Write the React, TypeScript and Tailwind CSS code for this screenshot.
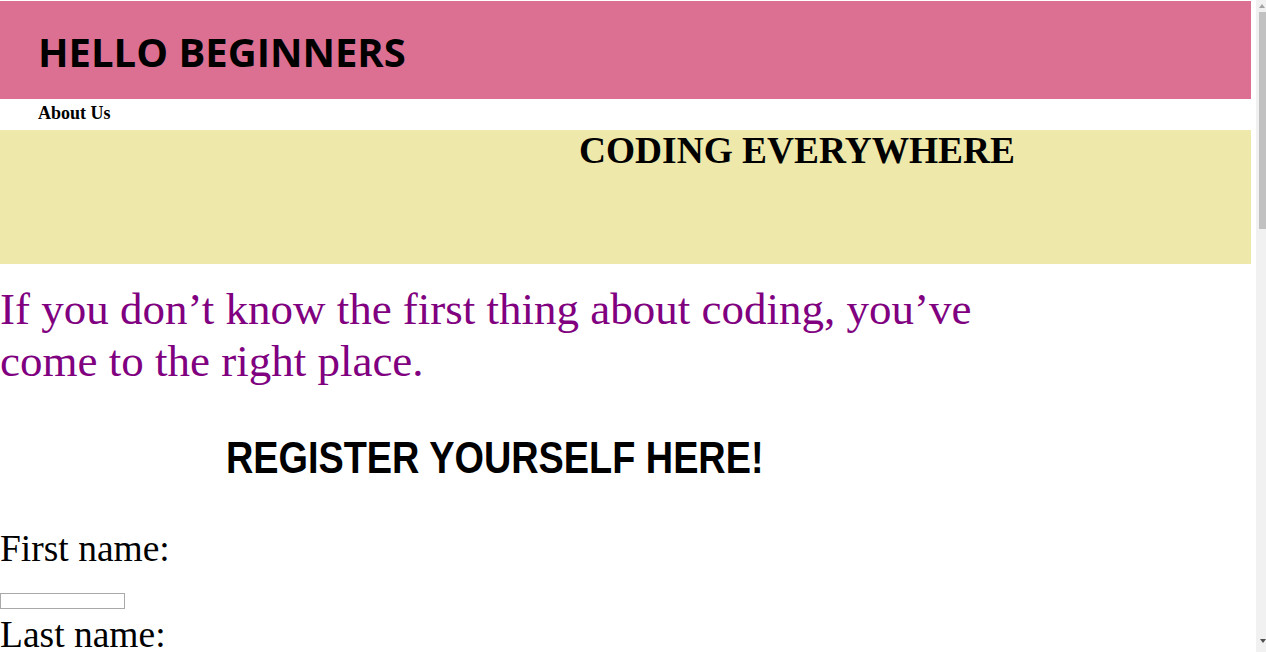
import React from "react";

export default function App() {
  return (
    <div className="flex h-[652px] w-[1266px] overflow-hidden bg-white">
      <div className="w-[1251px] shrink-0 overflow-hidden pt-[1px]">
        <header className="h-[98px] bg-[#db7093] pl-[38px] pt-[31px]">
          <h1
            className="text-[40px] leading-[40px] font-bold text-black"
            style={{ fontFamily: '"Comic Sans MS", "Open Sans", sans-serif' }}
          >
            HELLO BEGINNERS
          </h1>
        </header>
        <nav className="h-[31px] pl-[38px] pt-[2px]">
          <a
            className="text-[18px] leading-[20px] font-bold text-black"
            style={{ fontFamily: '"Liberation Serif", serif' }}
          >
            About Us
          </a>
        </nav>
        <section className="h-[134px] bg-[#eee8aa] pl-[579px]">
          <h2
            className="text-[37.4px] leading-[42px] font-bold text-black"
            style={{ fontFamily: '"Liberation Serif", serif' }}
          >
            CODING EVERYWHERE
          </h2>
        </section>
        <p
          className="mt-[20px] w-[1000px] text-[45px] leading-[51.75px] text-[#800080]"
          style={{ fontFamily: '"Liberation Serif", serif' }}
        >
          If you don’t know the first thing about coding, you’ve come to the right place.
        </p>
        <h2
          className="mt-[45px] pl-[226px] text-[44px] leading-[50px] font-bold text-black"
          style={{ fontFamily: '"Liberation Sans Narrow", "Arial Narrow", "Liberation Sans", sans-serif' }}
        >
          <span className="inline-block origin-left scale-x-[0.86]">
            REGISTER YOURSELF HERE!
          </span>
        </h2>
        <form style={{ fontFamily: '"Liberation Serif", serif' }}>
          <div className="mt-[45px] text-[37.5px] leading-[42px] text-black">First name:</div>
          <input
            type="text"
            className="mt-[23px] block h-[16px] w-[125px] border border-[#a9a9a9] bg-white"
          />
          <div className="mt-[5px] text-[37.5px] leading-[42px] text-black">Last name:</div>
          <input
            type="text"
            className="mt-[23px] block h-[16px] w-[125px] border border-[#a9a9a9] bg-white"
          />
        </form>
      </div>
      <div className="w-[5px] shrink-0 bg-white" />
      <div className="flex h-[652px] w-[10px] shrink-0 flex-col bg-[#f1f1f1]">
        <div className="flex h-[12px] items-center justify-end pr-[1px]">
          <svg width="6" height="4" viewBox="0 0 6 4">
            <path d="M0 4 L3 0 L6 4 Z" fill="#a3a3a3" />
          </svg>
        </div>
        <div className="ml-[3px] h-[217px] bg-[#c1c1c1]" />
        <div className="flex-1" />
        <div className="flex h-[14px] items-start justify-end pt-[1px]">
          <svg width="6" height="4" viewBox="0 0 6 4">
            <path d="M0 0 L6 0 L3 4 Z" fill="#505050" />
          </svg>
        </div>
      </div>
    </div>
  );
}
